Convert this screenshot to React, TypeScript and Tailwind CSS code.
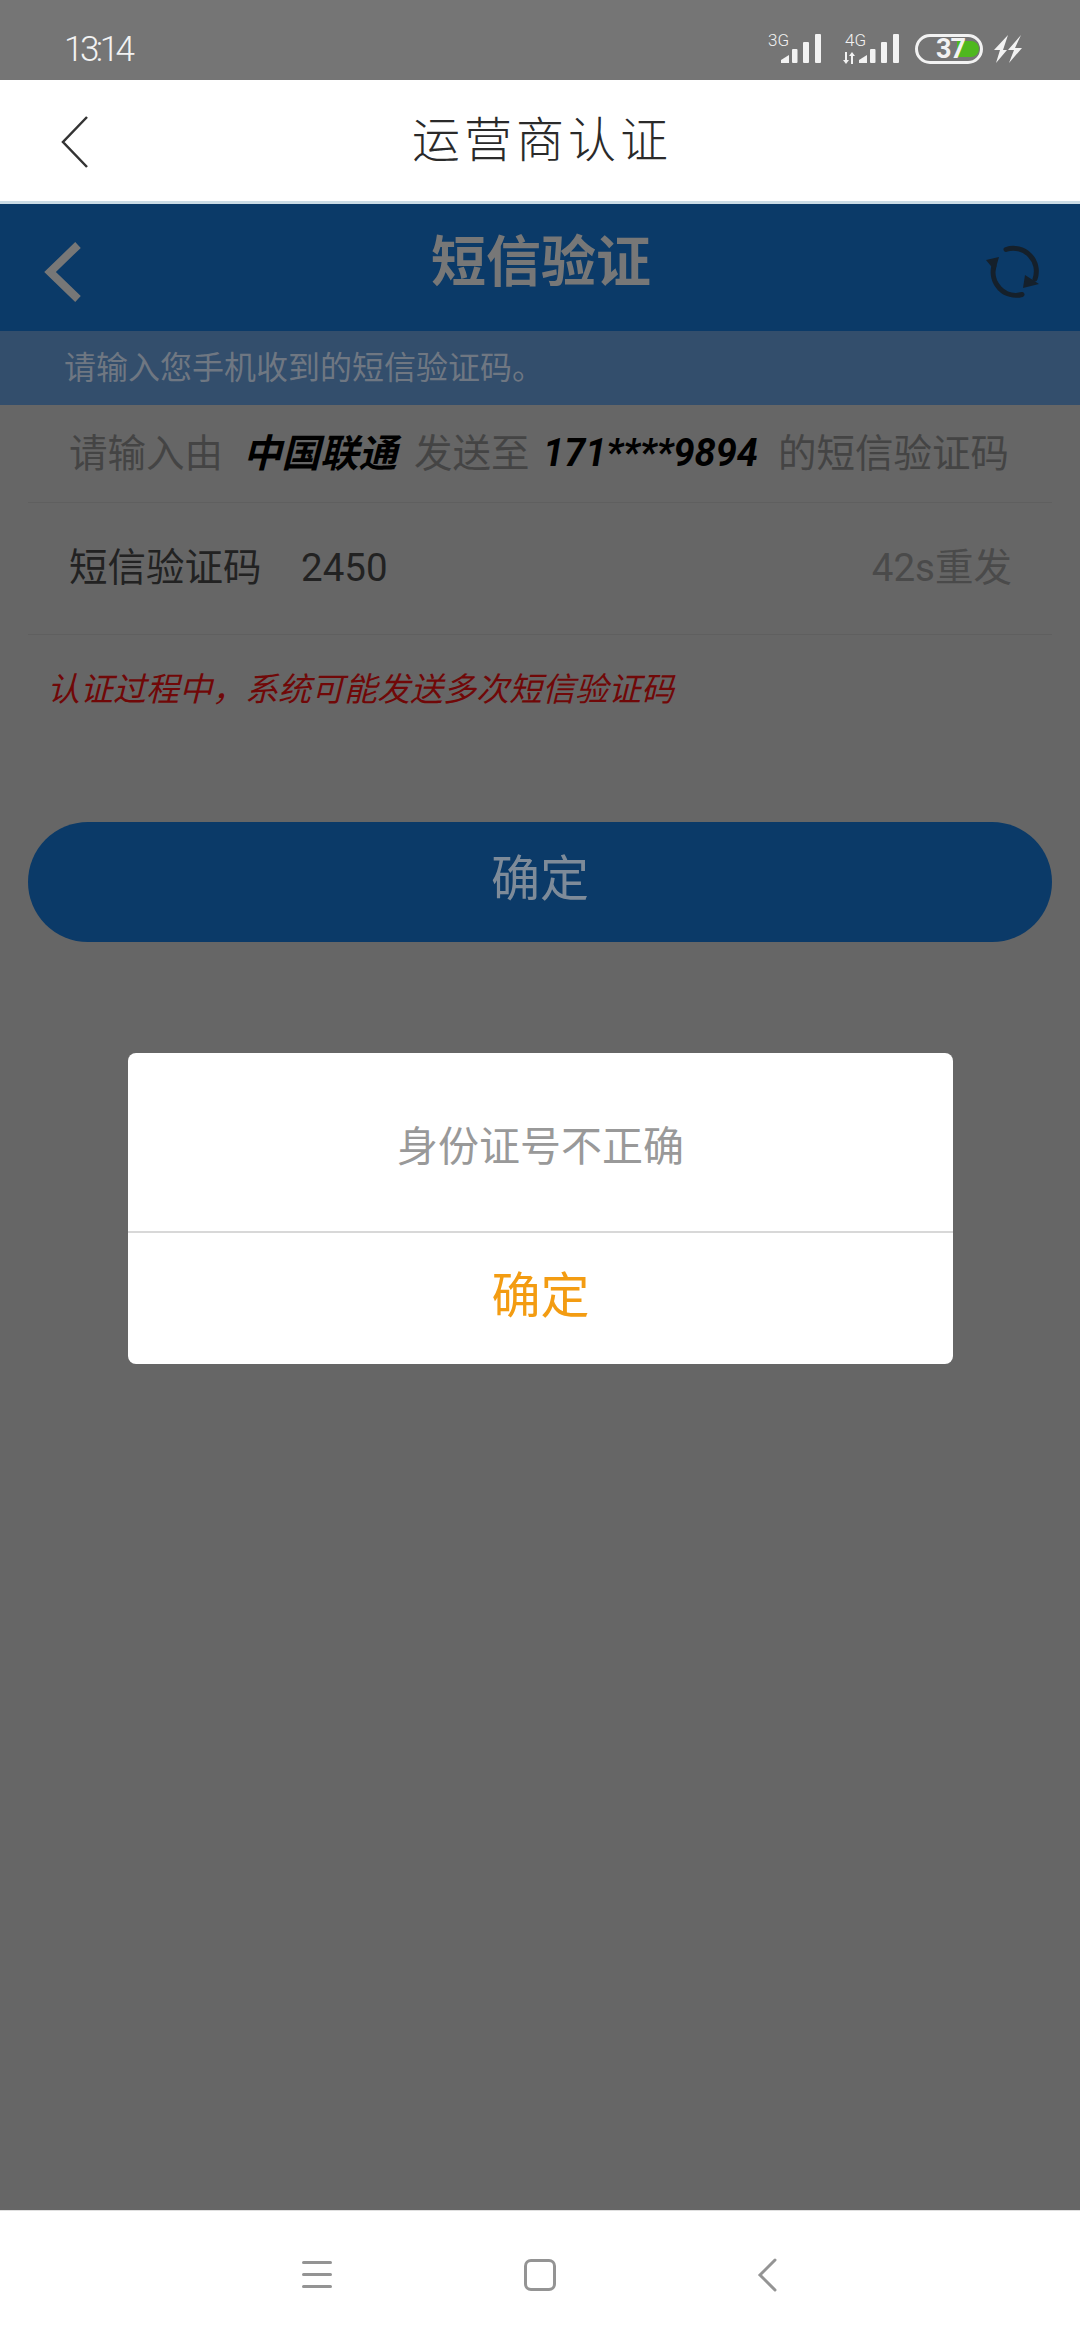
const cjk = "font-['Roboto','Noto_Sans_CJK_SC',sans-serif]";

function SignalBars() {
  return (
    <svg width="40" height="30" viewBox="0 0 40 30" fill="#f2f2f2" className="block">
      <path d="M0 29V26L8 21V29Z" />
      <rect x="11" y="15" width="5.5" height="14" rx="1" />
      <rect x="22" y="8" width="6" height="21" rx="1" />
      <rect x="34" y="0" width="6" height="29" rx="1" />
    </svg>
  );
}

function StatusBar() {
  return (
    <div className="h-[80px] bg-[#757575] flex items-start justify-between pl-[64px] pr-[58px] text-[#f2f2f2]">
      <span className="mt-[30px] text-[35px] leading-[40px] font-light tracking-[-3.5px] font-['Roboto',sans-serif]">13:14</span>
      <div className="flex items-start mt-[34px]">
        <div className="relative w-[53px] h-[30px]">
          <span className="absolute left-0 top-[-1px] text-[17px] leading-[15px] font-light font-['Roboto',sans-serif]">3G</span>
          <div className="absolute left-[13px] top-0"><SignalBars /></div>
        </div>
        <div className="relative w-[57px] h-[30px] ml-[21px]">
          <span className="absolute left-[3px] top-[-1px] text-[17px] leading-[15px] font-light font-['Roboto',sans-serif]">4G</span>
          <svg width="14" height="12" viewBox="0 0 14 12" className="absolute left-0 top-[18px]" fill="#f2f2f2">
            <path d="M3 0H5V8H7L4 12L1 8H3ZM9 12H11V4H13L10 0L7 4H9Z" />
          </svg>
          <div className="absolute left-[17px] top-0"><SignalBars /></div>
        </div>
        <div className="relative w-[68px] h-[30px] ml-[16px] rounded-full border-[3px] border-[#f2f2f2]">
          <div className="absolute left-[39px] top-[4px] w-[22px] h-[16px] rounded-r-full bg-[#4fb81f]" />
          <span className="absolute left-[18px] top-[-2px] text-[27px] leading-[28px] font-bold tracking-[-1px] font-['Roboto',sans-serif]">37</span>
        </div>
        <svg width="28" height="29" viewBox="0 0 28 29" className="ml-[11px] mt-[1px]" fill="#f2f2f2">
          <path d="M14 0L0 15H6L2 28L13 15H9ZM27 0L14 15H20L15 28L28 13H21Z" />
        </svg>
      </div>
    </div>
  );
}

function RefreshIcon() {
  return (
    <svg width="56" height="56" viewBox="0 0 56 56" fill="none">
      <path d="M20 5.5A23 23 0 0 1 49 35" stroke="#15202b" strokeWidth="5" strokeLinecap="round" />
      <path d="M36 50.5A23 23 0 0 1 8 22" stroke="#15202b" strokeWidth="5" strokeLinecap="round" />
      <path d="M0 16L13 13L9 27Z M39 31L53 40L37 44Z" fill="#15202b" />
    </svg>
  );
}

export default function App() {
  return (
    <div className={`relative w-[1080px] h-[2340px] flex flex-col overflow-hidden bg-[#666666] ${cjk}`}>
      <StatusBar />

      {/* app title bar */}
      <div className="relative h-[124px] bg-white border-b-[3px] border-[#cbdbe5] flex items-center justify-center">
        <svg width="30" height="54" viewBox="0 0 30 54" fill="none" className="absolute left-[60px] top-[35px]">
          <path d="M27 2L3 27L27 52" stroke="#333333" strokeWidth="2.5" />
        </svg>
        <span className="text-[48px] leading-[56px] tracking-[4px] text-[#2a2a2a] font-light mt-[1px] ml-[4px]">运营商认证</span>
      </div>

      {/* web page header */}
      <div className="relative h-[127px] bg-[#0b3a68] flex items-center justify-center">
        <svg width="40" height="62" viewBox="0 0 40 62" fill="none" className="absolute left-[43px] top-[37px]">
          <path d="M35 4L7 31L35 58" stroke="#777777" strokeWidth="8" />
        </svg>
        <span className="text-[55px] leading-[64px] font-bold text-[#777777] mt-[-12px] ml-[2px]">短信验证</span>
        <div className="absolute left-[986px] top-[40px]"><RefreshIcon /></div>
      </div>
      <div className="h-[74px] bg-[#334e6c] flex items-center pl-[64px] text-[32px] text-[#6f7782]">请输入您手机收到的短信验证码。</div>

      {/* form rows */}
      <div className="mx-[28px] h-[98px] border-b border-[#5f5f5f] flex items-center pl-[41px] text-[38.5px] text-[#444444] whitespace-nowrap">
        <span className="w-[174px]">请输入由</span>
        <span className="w-[171px] font-bold italic text-black">中国联通</span>
        <span className="w-[129px]">发送至</span>
        <span className="w-[235px] font-bold italic text-black text-[38px]">171****9894</span>
        <span>的短信验证码</span>
      </div>
      <div className="mx-[28px] h-[132px] border-b border-[#5f5f5f] flex items-center justify-between pl-[41px] pr-[40px] text-[38.5px] text-[#222222]">
        <div className="flex mt-[-2px]">
          <span className="w-[232px]">短信验证码</span>
          <span>2450</span>
        </div>
        <span className="text-[#4a4a4a] mt-[-2px]">42s重发</span>
      </div>
      <div className="h-[110px] flex items-center pl-[47px] text-[33px] italic text-[#700808]">认证过程中，系统可能发送多次短信验证码</div>

      <div className="mx-[28px] mt-[77px] h-[120px] rounded-full bg-[#0b3a68] flex items-center justify-center text-[49px] text-[#7e8b99]">
        <span className="mt-[-5px]">确定</span>
      </div>

      <div className="flex-1" />

      {/* nav bar */}
      <div className="relative h-[130px] bg-white border-t border-[#e0e0e0]">
        <div className="absolute left-[302px] top-[50px] w-[30px] flex flex-col gap-[9px]">
          <div className="h-[3px] rounded-full bg-[#949494]" />
          <div className="h-[3px] rounded-full bg-[#949494]" />
          <div className="h-[3px] rounded-full bg-[#949494]" />
        </div>
        <div className="absolute left-[524px] top-[48px] w-[32px] h-[32px] rounded-[7px] border-[3px] border-[#949494]" />
        <svg width="20" height="34" viewBox="0 0 20 34" fill="none" className="absolute left-[757px] top-[47px]">
          <path d="M18 2L3 17L18 32" stroke="#949494" strokeWidth="3" strokeLinecap="round" />
        </svg>
      </div>

      {/* dialog */}
      <div className="absolute left-[128px] top-[1053px] w-[825px] h-[311px] rounded-[8px] bg-white flex flex-col">
        <div className="h-[180px] flex items-center justify-center text-[41px] text-[#999999] border-b-2 border-[#d8d8d8]">
          <span className="mt-[11px]">身份证号不正确</span>
        </div>
        <div className="flex-1 flex items-center justify-center text-[49px] text-[#f39c12]">
          <span className="mt-[-3px]">确定</span>
        </div>
      </div>
    </div>
  );
}
